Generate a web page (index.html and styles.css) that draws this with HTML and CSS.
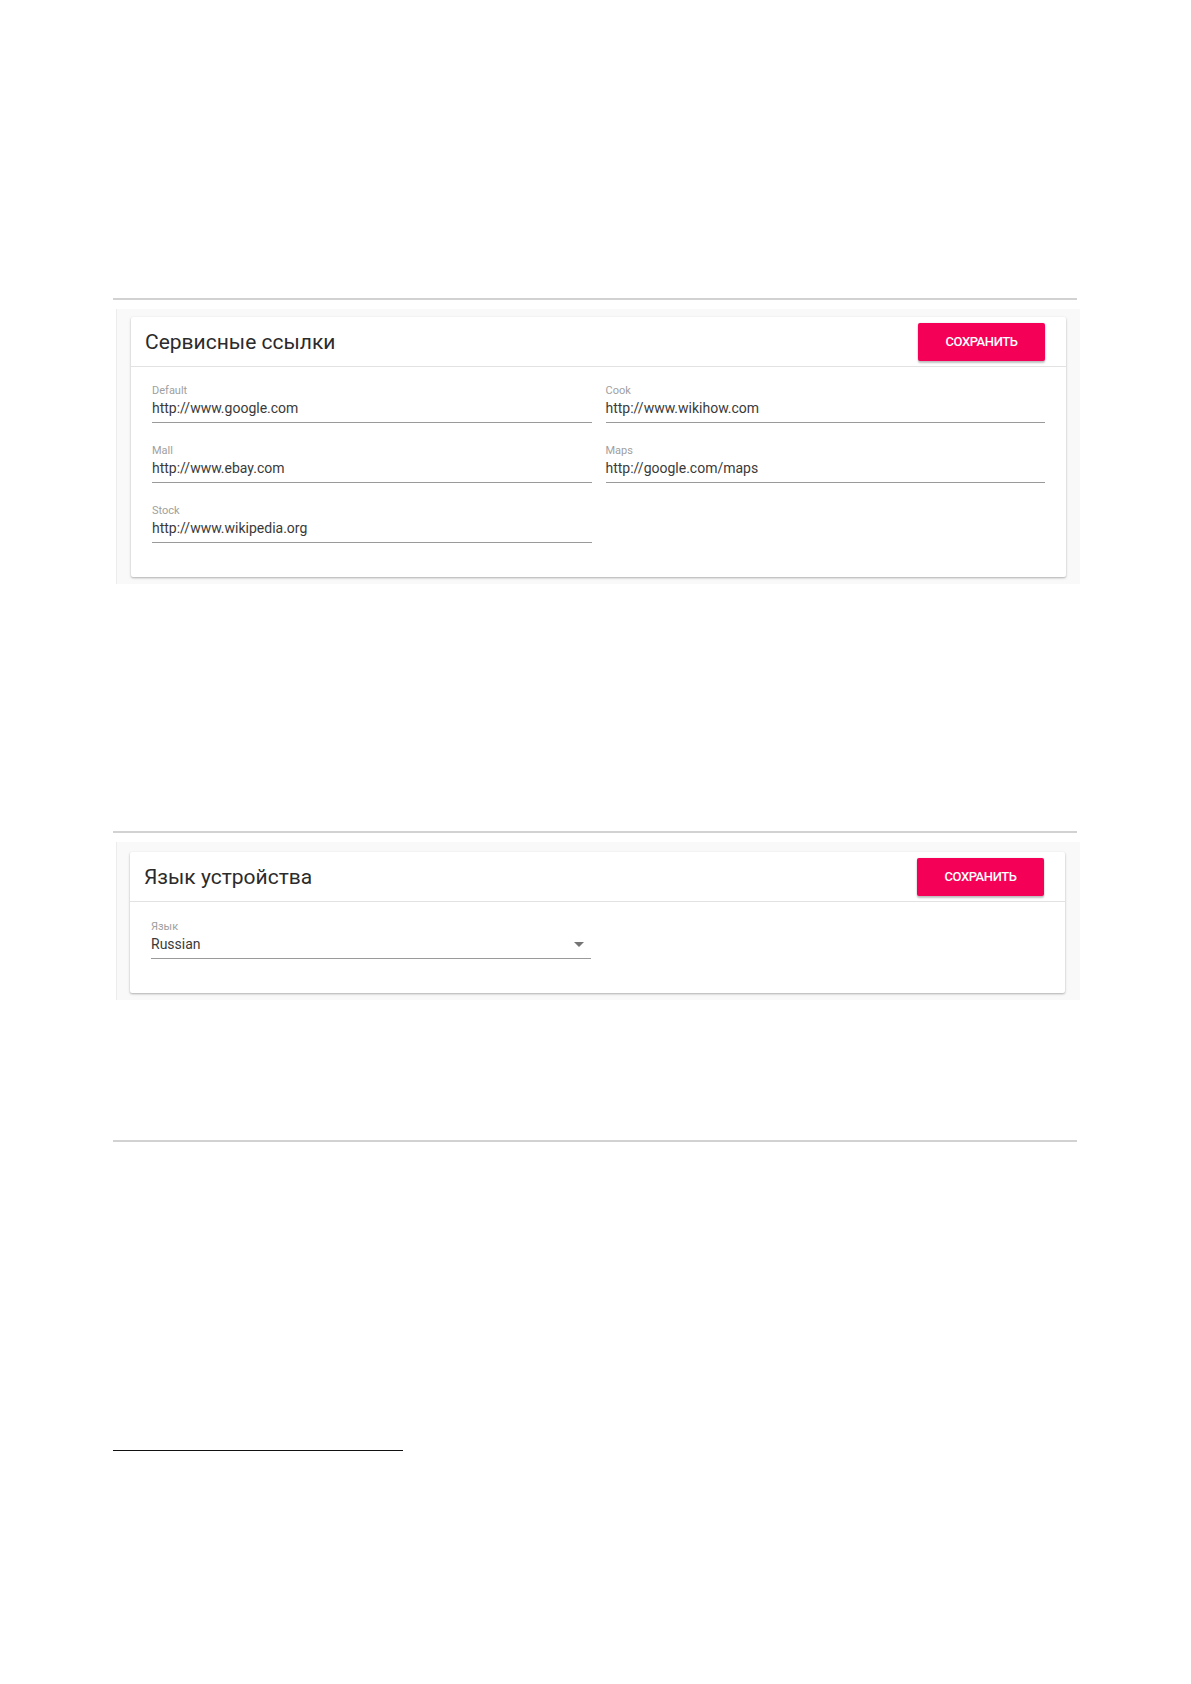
FILE: index.html
```html
<!DOCTYPE html>
<html lang="ru">
<head>
  <meta charset="UTF-8" />
  <meta name="viewport" content="width=device-width, initial-scale=1" />
  <title>Настройки устройства</title>
  <link rel="stylesheet" href="styles.css">
</head>
<body>

<div class="page">

  <hr class="rule rule-first">

  <div class="shot">
    <div class="card">
      <div class="card-head">
        <h3 class="card-title">Сервисные ссылки</h3>
        <button type="button" class="btn-save">Сохранить</button>
      </div>
      <div class="card-body fields">
        <div class="field">
          <div class="field-label">Default</div>
          <div class="field-value">http://www.google.com</div>
        </div>
        <div class="field">
          <div class="field-label">Cook</div>
          <div class="field-value">http://www.wikihow.com</div>
        </div>
        <div class="field">
          <div class="field-label">Mall</div>
          <div class="field-value">http://www.ebay.com</div>
        </div>
        <div class="field">
          <div class="field-label">Maps</div>
          <div class="field-value">http://google.com/maps</div>
        </div>
        <div class="field">
          <div class="field-label">Stock</div>
          <div class="field-value">http://www.wikipedia.org</div>
        </div>
      </div>
    </div>
  </div>

  <hr class="rule rule-second">

  <div class="shot shot-lang">
    <div class="card">
      <div class="card-head">
        <h3 class="card-title">Язык устройства</h3>
        <button type="button" class="btn-save">Сохранить</button>
      </div>
      <div class="card-body fields">
        <div class="field">
          <div class="field-label">Язык</div>
          <div class="field-value field-select">
            <span>Russian</span>
            <svg class="arrow" width="10" height="5" viewBox="0 0 10 5"><path d="M0 0h10L5 5z" fill="#757575"/></svg>
          </div>
        </div>
      </div>
    </div>
  </div>

  <hr class="rule rule-third">

  <hr class="footnote-rule">

</div>

</body>
</html>
```

FILE: styles.css
```css
body {
  margin: 0;
  font-family: Roboto, "Liberation Sans", Arial, sans-serif;
  color: rgba(0, 0, 0, 0.87);
  background: #fff;
}
.page {
  width: 964px;
  margin-left: 113px;
}
.rule {
  border: none;
  height: 2px;
  background-color: #d2d2d2;
  margin: 0;
}
.rule-first {
  margin-top: 298px;
}
.rule-second {
  margin-top: 247px;
}
.rule-third {
  margin-top: 140px;
}
.footnote-rule {
  border: none;
  height: 1px;
  width: 290px;
  background-color: #111;
  margin: 308px 0 0;
}
.shot {
  margin: 9px -3px 0 3px;
  padding: 8px 14px 7px 14px;
  background-color: #f9f9f9;
  border-left: 1px solid #ececec;
}
.shot-lang {
  padding: 10px 15px 7px 13px;
}
.card {
  background-color: #fff;
  box-shadow: 0 1px 3px rgba(0, 0, 0, 0.12), 0 1px 2px rgba(0, 0, 0, 0.2);
  border-radius: 2px;
}
.card-head {
  display: flex;
  align-items: center;
  justify-content: space-between;
  height: 49px;
  padding: 0 21px 0 14px;
  border-bottom: 1px solid #e2e2e2;
}
.card-title {
  margin: 0;
  font-size: 21px;
  font-weight: 400;
  color: #2b2b2b;
}
.btn-save {
  width: 127px;
  height: 38px;
  border: none;
  border-radius: 2px;
  background-color: #f50057;
  color: #fff;
  font-family: Roboto, "Liberation Sans", Arial, sans-serif;
  font-size: 13px;
  font-weight: 500;
  letter-spacing: -0.4px;
  text-transform: uppercase;
  box-shadow: 0 2px 2px rgba(0, 0, 0, 0.24), 0 0 2px rgba(0, 0, 0, 0.12);
  cursor: pointer;
}
.card-body {
  padding: 17px 21px 34px 21px;
}
.shot-lang .card-body {
  padding-top: 18px;
}
.fields {
  display: grid;
  grid-template-columns: 1fr 1fr;
  column-gap: 14px;
  row-gap: 21px;
}
.field {
  padding-bottom: 5px;
  border-bottom: 1px solid #9a9a9a;
}
.field-label {
  font-size: 11px;
  line-height: 13px;
  color: #a0a0a0;
  margin-bottom: 2px;
}
.field-value {
  font-size: 14px;
  line-height: 18px;
  color: #3a3a3a;
}
.field-select {
  display: flex;
  align-items: center;
  justify-content: space-between;
  padding-right: 7px;
}
```
